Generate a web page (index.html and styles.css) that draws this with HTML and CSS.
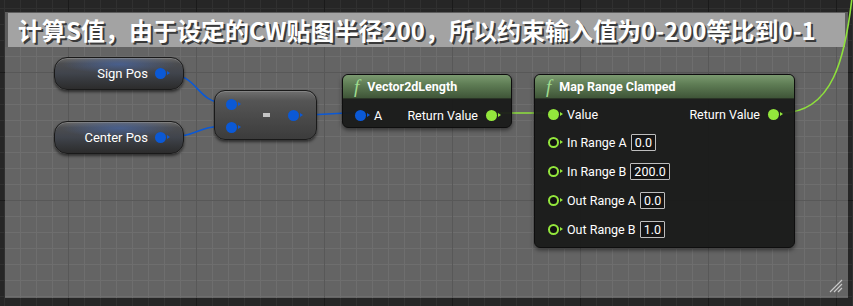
FILE: index.html
```html
<!DOCTYPE html>
<html lang="zh-CN">
<head>
    <meta charset="UTF-8">
    <meta name="viewport" content="width=device-width, initial-scale=1.0">
    <title>Blueprint - Map Range</title>
    <link rel="stylesheet" href="styles.css">
</head>
<body>
    <div class="graph">
        <div class="comment">
            <div class="comment-title">计算S值，由于设定的CW贴图半径200，所以约束输入值为0-200等比到0-1</div>
            <div class="comment-body"></div>
            <svg class="resize" width="16" height="14" viewBox="0 0 16 14">
                <path d="M2 13 L14 1 M6 13 L14 5 M10 13 L14 9" stroke="#c8c8c8" stroke-width="1.2" fill="none"/>
            </svg>
        </div>

        <svg class="wires" width="853" height="306" viewBox="0 0 853 306">
            <path d="M167 74 C200 74, 195 103, 226 103" class="wire-blue"/>
            <path d="M167 137 C198 137, 196 126, 226 126" class="wire-blue"/>
            <path d="M300 115 C325 115, 330 113, 354 113" class="wire-blue"/>
            <path d="M496 113 L546 113" class="wire-green"/>
            <path d="M781 113 C832 113, 846 60, 853 -12" class="wire-green"/>
        </svg>

        <!-- variable getters -->
        <div class="node var-node sign-pos">
            <span>Sign Pos</span>
            <i class="pin pin-vec"></i>
        </div>
        <div class="node var-node center-pos">
            <span>Center Pos</span>
            <i class="pin pin-vec"></i>
        </div>

        <!-- subtract -->
        <div class="node op-node">
            <div class="op-inputs">
                <i class="pin pin-vec"></i>
                <i class="pin pin-vec"></i>
            </div>
            <span class="op-sign"></span>
            <i class="pin pin-vec"></i>
        </div>

        <!-- Vector2dLength -->
        <div class="node func-node vec-length">
            <div class="func-header"><span class="fx">f</span>Vector2dLength</div>
            <div class="func-body">
                <div class="row">
                    <div class="row-left"><i class="pin pin-vec"></i>A</div>
                    <div class="row-right">Return Value<i class="pin pin-float"></i></div>
                </div>
            </div>
        </div>

        <!-- Map Range Clamped -->
        <div class="node func-node map-range">
            <div class="func-header"><span class="fx">f</span>Map Range Clamped</div>
            <div class="func-body">
                <div class="row first">
                    <div class="row-left"><i class="pin pin-float"></i>Value</div>
                    <div class="row-right">Return Value<i class="pin pin-float"></i></div>
                </div>
                <div class="row">
                    <div class="row-left"><i class="pin pin-float empty"></i>In Range A<span class="field">0.0</span></div>
                </div>
                <div class="row">
                    <div class="row-left"><i class="pin pin-float empty"></i>In Range B<span class="field">200.0</span></div>
                </div>
                <div class="row">
                    <div class="row-left"><i class="pin pin-float empty"></i>Out Range A<span class="field">0.0</span></div>
                </div>
                <div class="row">
                    <div class="row-left"><i class="pin pin-float empty"></i>Out Range B<span class="field">1.0</span></div>
                </div>
            </div>
        </div>
    </div>
</body>
</html>
```

FILE: styles.css
```css
body { margin: 0; font-family: Roboto, "Noto Sans", sans-serif; overflow: hidden; }

.graph {
    position: relative; width: 853px; height: 306px; overflow: hidden;
    background-color: #262626;
    background-image:
        linear-gradient(to right, #1a1a1a 1px, transparent 1px),
        linear-gradient(to bottom, #1a1a1a 1px, transparent 1px),
        linear-gradient(to right, #303030 1px, transparent 1px),
        linear-gradient(to bottom, #303030 1px, transparent 1px);
    background-size: 128px 128px, 128px 128px, 16px 16px, 16px 16px;
    background-position: 68px 72px, 68px 72px, 4px 8px, 4px 8px;
}

/* comment box */
.comment {
    position: absolute; left: 5px; top: 12px; width: 843px; height: 286px;
    display: flex; flex-direction: column;
    background-color: #5e5e5e;
}
.comment-title {
    flex: none; height: 34px; line-height: 33px; margin: 1px 3px 0; padding-left: 10px;
    background-color: #a3a3a3;
    color: #fff; font-size: 24px; font-weight: bold;
    font-family: "Noto Sans CJK SC", "Noto Sans", sans-serif;
    text-shadow: 2px 2px 0 #3a3a3a;
    white-space: nowrap; overflow: hidden;
}
.comment-body {
    flex: 1;
    background-color: #646464;
    background-image:
        linear-gradient(to right, #585858 1px, transparent 1px),
        linear-gradient(to bottom, #585858 1px, transparent 1px),
        linear-gradient(to right, #6e6e6e 1px, transparent 1px),
        linear-gradient(to bottom, #6e6e6e 1px, transparent 1px);
    background-size: 128px 128px, 128px 128px, 16px 16px, 16px 16px;
    background-position: 63px 25px, 63px 25px, 15px 9px, 15px 9px;
}
.resize { position: absolute; right: 4px; bottom: 5px; }

.wires { position: absolute; left: 0; top: 0; }
.wire-blue { fill: none; stroke: #0b59d6; stroke-width: 1.6; }
.wire-green { fill: none; stroke: #8ee03c; stroke-width: 1.6; }

/* nodes */
.node { position: absolute; box-sizing: border-box; color: #fff; font-size: 12.5px; }

.pin { display: inline-block; position: relative; width: 11px; height: 11px; border-radius: 50%; box-sizing: border-box; flex: none; }
.pin:after {
    content: ""; position: absolute; right: -4px; top: 3px;
    border-left: 3px solid; border-top: 2.5px solid transparent; border-bottom: 2.5px solid transparent;
}
.pin-vec { background: #0b59d6; }
.pin-vec:after { border-left-color: #0b59d6; }
.pin-float { background: #93e63c; }
.pin-float:after { border-left-color: #93e63c; }
.pin-float.empty { background: #111; border: 2px solid #93e63c; }
.pin-float.empty:after { top: 1px; right: -6px; }

.var-node {
    left: 54px; width: 130px; height: 33px; font-size: 13px;
    display: flex; align-items: center; justify-content: flex-end; gap: 7px; padding-right: 17px;
    border: 1px solid #1a1a1a; border-radius: 13px;
    background:
        radial-gradient(ellipse 45% 30% at 50% 20%, rgba(70,110,190,0.55), transparent),
        linear-gradient(to bottom, #6a6a6a 0%, #4c4d50 18%, #40444c 50%, #35373b 75%, #2c2c2c 100%);
    box-shadow: 0 2px 3px rgba(0,0,0,0.55), inset 0 1px 0 rgba(255,255,255,0.15);
}
.sign-pos { top: 57px; }
.center-pos { top: 121px; }

.op-node {
    left: 214px; top: 90px; width: 103px; height: 50px;
    display: flex; align-items: center; padding: 0 17px 0 11px;
    border: 1px solid #1a1a1a; border-radius: 11px;
    background: linear-gradient(to bottom, #707070 0%, #555 20%, #484848 60%, #3c3c3c 100%);
    box-shadow: 0 2px 3px rgba(0,0,0,0.55), inset 0 1px 0 rgba(255,255,255,0.15);
}
.op-inputs { display: flex; flex-direction: column; gap: 12px; margin-top: 1px; }
.op-sign { flex: 1; height: 4px; display: flex; justify-content: center; }
.op-sign:before { content: ""; width: 7px; height: 4px; background: #c4c4c4; margin-left: 8px; }

.func-node {
    top: 74px; border: 1px solid #0e0e0e; border-radius: 6px; overflow: hidden;
    background: rgba(24,25,24,0.94);
    box-shadow: 0 2px 4px rgba(0,0,0,0.5);
}
.func-header {
    height: 23px; display: flex; align-items: center; padding-left: 11px;
    font-weight: bold; font-size: 12.5px;
    background: linear-gradient(to bottom, #7b9a70 0%, #5f7d55 40%, #3f5538 100%);
    border-bottom: 1px solid #2a3326;
}
.fx { font-family: "Liberation Serif", serif; font-style: italic; font-weight: normal; font-size: 19px; color: #9fdc8f; margin-right: 8px; }

.row { display: flex; align-items: center; justify-content: space-between; height: 29px; }
.row-left, .row-right { display: flex; align-items: center; gap: 8px; }
.field {
    margin-left: -4px; padding: 0 3px; height: 15px; line-height: 15px; min-width: 16px;
    border: 1px solid #bdbdbd; border-radius: 1px; background: #141414; text-align: center;
}

.vec-length { left: 342px; width: 170px; height: 54px; }
.vec-length .func-body { padding: 2px 14px 0 12px; }
.vec-length .row { height: 28px; }

.map-range { left: 534px; width: 261px; height: 174px; }
.map-range .func-body { padding: 1px 15px 0 13px; }
.map-range .row.first { height: 28px; }
.map-range .row-left { gap: 8px; }
```
